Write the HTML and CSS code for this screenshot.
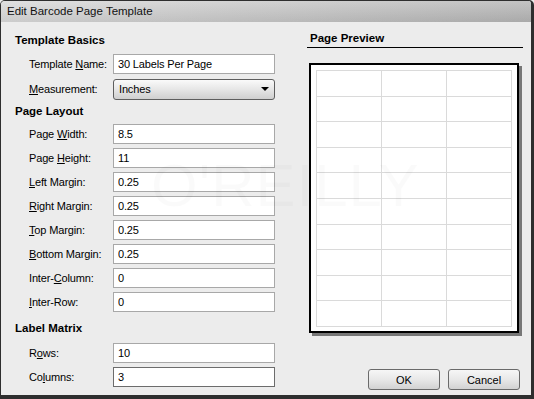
FILE: index.html
```html
<!DOCTYPE html>
<html lang="en">
<head>
    <meta charset="UTF-8">
    <title>Edit Barcode Page Template</title>
    <link rel="stylesheet" href="styles.css">
</head>
<body>
    <div class="dialog">
        <div class="titlebar">Edit Barcode Page Template</div>

        <div class="dialog-body">
            <!-- Venstre side: formularen -->
            <div class="form">
                <h2 class="group-title title-basics">Template Basics</h2>
                <div class="rows rows-basics">
                    <div class="row">
                        <label>Template <u>N</u>ame:</label>
                        <input class="field" type="text" value="30 Labels Per Page">
                    </div>
                    <div class="row">
                        <label><u>M</u>easurement:</label>
                        <div class="select">
                            <span>Inches</span>
                            <span class="arrow"></span>
                        </div>
                    </div>
                </div>

                <h2 class="group-title title-layout">Page Layout</h2>
                <div class="rows">
                    <div class="row"><label>Page <u>W</u>idth:</label><input class="field" type="text" value="8.5"></div>
                    <div class="row"><label>Page <u>H</u>eight:</label><input class="field" type="text" value="11"></div>
                    <div class="row"><label><u>L</u>eft Margin:</label><input class="field" type="text" value="0.25"></div>
                    <div class="row"><label><u>R</u>ight Margin:</label><input class="field" type="text" value="0.25"></div>
                    <div class="row"><label><u>T</u>op Margin:</label><input class="field" type="text" value="0.25"></div>
                    <div class="row"><label><u>B</u>ottom Margin:</label><input class="field" type="text" value="0.25"></div>
                    <div class="row"><label>Inter-<u>C</u>olumn:</label><input class="field" type="text" value="0"></div>
                    <div class="row"><label><u>I</u>nter-Row:</label><input class="field" type="text" value="0"></div>
                </div>

                <h2 class="group-title title-matrix">Label Matrix</h2>
                <div class="rows">
                    <div class="row"><label>R<u>o</u>ws:</label><input class="field" type="text" value="10"></div>
                    <div class="row"><label>Co<u>l</u>umns:</label><input class="field field-dark" type="text" value="3"></div>
                </div>
            </div>

            <!-- Højre side: forhåndsvisning -->
            <div class="preview">
                <h2 class="preview-title">Page Preview</h2>
                <div class="page">
                    <div class="labels">
                        <span></span><span></span><span></span>
                        <span></span><span></span><span></span>
                        <span></span><span></span><span></span>
                        <span></span><span></span><span></span>
                        <span></span><span></span><span></span>
                        <span></span><span></span><span></span>
                        <span></span><span></span><span></span>
                        <span></span><span></span><span></span>
                        <span></span><span></span><span></span>
                        <span></span><span></span><span></span>
                    </div>
                </div>
                <div class="buttons">
                    <button>OK</button>
                    <button>Cancel</button>
                </div>
            </div>
        </div>

        <div class="watermark">O'REILLY<sup>®</sup></div>
    </div>
</body>
</html>
```

FILE: styles.css
```css
/* Generel styling */
html, body {
    margin: 0;
    padding: 0;
    background: #ececec;
}

* {
    box-sizing: border-box;
}

.dialog {
    position: relative;
    width: 534px;
    height: 399px;
    background: #ececec;
    border: 1px solid #2e2e2e;
    border-right-width: 3px;
    border-bottom-width: 4px;
    border-radius: 5px 5px 0 0;
    overflow: hidden;
    font-family: "Liberation Sans", Arial, sans-serif;
    font-size: 11px;
    letter-spacing: -0.15px;
    color: #000;
}

.titlebar {
    height: 21px;
    line-height: 21px;
    padding-left: 6px;
    font-size: 11.5px;
    letter-spacing: 0;
    color: #111;
    background:
        linear-gradient(to bottom, rgba(255, 255, 255, 0.2), rgba(0, 0, 0, 0.06)),
        linear-gradient(to right, #d9d9d9, #b4b4b4);
}

.dialog-body {
    display: flex;
}

/* Formular */
.form {
    width: 290px;
    padding-left: 14px;
}

.group-title {
    margin: 0;
    height: 16px;
    line-height: 16px;
    font-size: 11.5px;
    font-weight: bold;
    letter-spacing: 0;
}

.title-basics {
    margin-top: 10px;
    margin-bottom: 6px;
}

.title-layout {
    margin-top: 4px;
    margin-bottom: 5px;
}

.title-matrix {
    margin-top: 8px;
    margin-bottom: 7px;
}

.rows {
    display: flex;
    flex-direction: column;
    gap: 4px;
}

.rows-basics {
    gap: 5px;
}

.row {
    display: flex;
    align-items: center;
    height: 20px;
}

.row label {
    flex: 0 0 98px;
    padding-left: 14px;
    white-space: nowrap;
}

.field {
    flex: 0 0 162px;
    width: 162px;
    height: 20px;
    margin: 0;
    padding: 0 4px;
    font-family: inherit;
    font-size: 11px;
    letter-spacing: -0.15px;
    color: #000;
    background: #fff;
    border: 1px solid #a8a8a8;
    outline: none;
}

.field-dark {
    border-color: #6c6c6c;
}

.select {
    display: flex;
    align-items: center;
    justify-content: space-between;
    flex: 0 0 162px;
    height: 21px;
    padding: 0 5px;
    border: 1px solid #5e5e5e;
    border-radius: 3px;
    background: linear-gradient(to bottom, #fafafa, #e6e6e6 50%, #cfcfcf);
}

.arrow {
    width: 0;
    height: 0;
    border-left: 4px solid transparent;
    border-right: 4px solid transparent;
    border-top: 4px solid #000;
}

/* Forhåndsvisning */
.preview {
    width: 216px;
    margin-left: 16px;
    display: flex;
    flex-direction: column;
}

.preview-title {
    margin: 8px 0 0 0;
    padding-left: 3px;
    height: 18px;
    line-height: 16px;
    font-size: 11.5px;
    font-weight: bold;
    letter-spacing: 0;
    border-bottom: 1px solid #000;
}

.page {
    width: 210px;
    height: 270px;
    margin: 15px 0 0 2px;
    padding: 5px 4px 4px 5px;
    background: #fff;
    border: 2px solid #000;
    box-shadow: 3px 3px 0 #777;
}

.labels {
    display: grid;
    grid-template-columns: repeat(3, 1fr);
    grid-template-rows: repeat(10, 1fr);
    width: 196px;
    height: 257px;
    border-top: 1px solid #dadada;
    border-left: 1px solid #dadada;
}

.labels span {
    border-right: 1px solid #dadada;
    border-bottom: 1px solid #dadada;
}

.buttons {
    display: flex;
    justify-content: flex-end;
    gap: 8px;
    margin-top: 36px;
    padding-right: 3px;
}

button {
    width: 72px;
    height: 21px;
    padding: 0;
    font-family: inherit;
    font-size: 11px;
    color: #000;
    border: 1px solid #6a6a6a;
    border-radius: 3px;
    background: linear-gradient(to bottom, #f6f6f6, #e8e8e8 50%, #d2d2d2);
}

/* Vandmærke */
.watermark {
    position: absolute;
    left: 150px;
    top: 150px;
    font-size: 60px;
    letter-spacing: 1px;
    color: rgba(0, 0, 0, 0.02);
    pointer-events: none;
}

.watermark sup {
    font-size: 24px;
}
```
